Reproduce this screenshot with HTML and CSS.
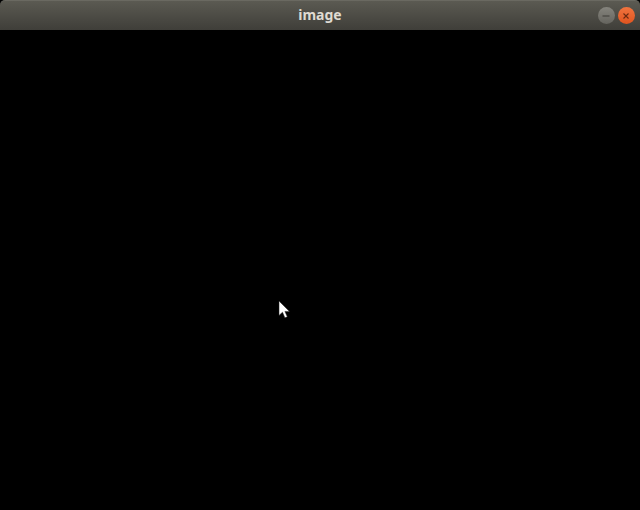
FILE: index.html
```
<!DOCTYPE html>
<html lang="en">
<head>
<meta charset="utf-8">
<title>image</title>
<link rel="stylesheet" href="styles.css">
</head>
<body>
<div class="window">
  <header class="titlebar">
    <span class="title">image</span>
    <div class="controls">
      <span class="btn btn-min"><svg viewBox="0 0 16 16" width="16" height="16"><path d="M4.5 8h7" stroke="#3c3b37" stroke-width="1" fill="none"/></svg></span>
      <span class="btn btn-close"><svg viewBox="0 0 16 16" width="16" height="16"><path d="M5.5 5.5l5 5M10.5 5.5l-5 5" stroke="#6a2a12" stroke-width="1.1" fill="none"/></svg></span>
    </div>
  </header>
  <main class="content">
    <svg class="cursor" viewBox="0 0 12 20" width="12" height="20"><path d="M1 1v14.4l3.5-3.2 2.4 5.6 2.4-1.1-2.4-5.3h4.6z" fill="#fff" stroke="#222" stroke-width=".5"/></svg>
  </main>
</div>
</body>
</html>
```
FILE: styles.css
```
html, body { margin: 0; padding: 0; background: #000; }
.window { width: 640px; height: 510px; display: flex; flex-direction: column; overflow: hidden; }
.titlebar {
  position: relative; flex: none; display: flex; align-items: center; justify-content: flex-end;
  height: 29px; background: linear-gradient(#5b5a52, #3f3e39); border-top: 1px solid #6a6961;
  border-radius: 5px 5px 0 0;
}
.title {
  position: absolute; left: 0; right: 0; top: 6px; text-align: center;
  font: bold 14px/16px "Noto Sans", sans-serif; color: #dfdbd2;
}
.controls { display: flex; gap: 3px; padding-right: 5.5px; }
.btn { width: 17px; height: 17px; border-radius: 50%; display: flex; align-items: center; justify-content: center; }
.btn-min { background: linear-gradient(#85847d, #65645e); }
.btn-close { background: linear-gradient(#f0743f, #e0541f); }
.content { flex: 1; background: #000; position: relative; }
.cursor { position: absolute; left: 278px; top: 270px; }
```
